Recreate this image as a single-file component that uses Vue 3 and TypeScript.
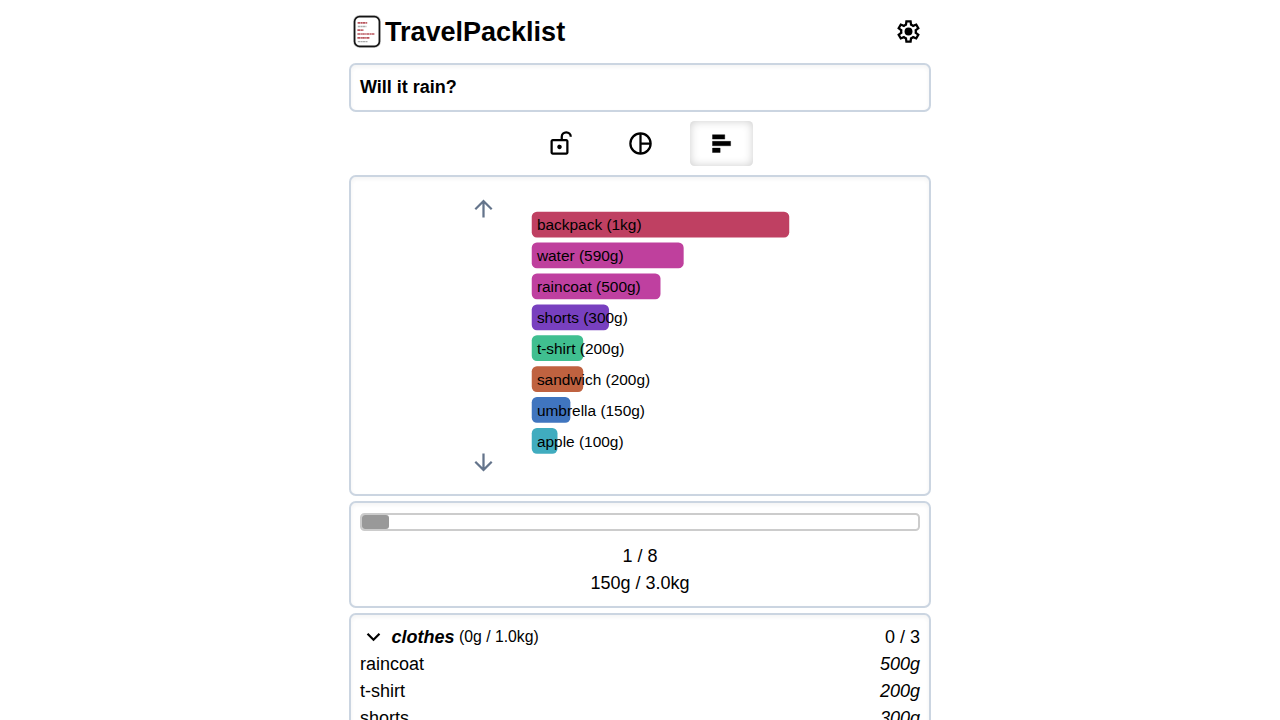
<script setup lang="ts">
interface Bar {
  name: string
  label: string
  grams: number
  color: string
}

const bars: Bar[] = [
  { name: 'backpack', label: '1kg', grams: 1000, color: '#bf4062' },
  { name: 'water', label: '590g', grams: 590, color: '#bf409d' },
  { name: 'raincoat', label: '500g', grams: 500, color: '#bf40a0' },
  { name: 'shorts', label: '300g', grams: 300, color: '#7840bf' },
  { name: 't-shirt', label: '200g', grams: 200, color: '#40bf90' },
  { name: 'sandwich', label: '200g', grams: 200, color: '#bf6240' },
  { name: 'umbrella', label: '150g', grams: 150, color: '#4075bf' },
  { name: 'apple', label: '100g', grams: 100, color: '#40acbf' },
]

const clothes = [
  { name: 'raincoat', weight: '500g' },
  { name: 't-shirt', weight: '200g' },
  { name: 'shorts', weight: '300g' },
]
</script>

<template>
  <main class="page">
    <header class="header">
      <svg class="logo" viewBox="0 0 28 33">
        <rect class="logo-glow" x="0.8" y="0.8" width="26.4" height="31.4" rx="5.5" />
        <rect class="logo-frame" x="1.6" y="1.6" width="24.8" height="29.8" rx="5" />
        <g class="logo-lines">
          <path class="red" d="M4.6 7.9h9.8M4.4 15.1h6M4.4 19h17.2M4.4 22.9h12" />
          <path class="grey" d="M4.8 11.5h8.6M4.8 26.7h10" />
        </g>
      </svg>
      <h1>TravelPacklist</h1>
      <button class="settings" aria-label="Settings">
        <svg class="icon" viewBox="0 0 24 24">
          <path
            fill-rule="evenodd"
            d="m9.25 22l-.4-3.2q-.325-.125-.612-.3t-.563-.375L4.7 19.375l-2.75-4.75l2.575-1.95Q4.5 12.5 4.5 12.338v-.675q0-.163.025-.338L1.95 9.375l2.75-4.75l2.975 1.25q.275-.2.575-.375t.6-.3l.4-3.2h5.5l.4 3.2q.325.125.613.3t.562.375l2.975-1.25l2.75 4.75l-2.575 1.95q.025.175.025.338v.674q0 .163-.05.338l2.575 1.95l-2.75 4.75l-2.95-1.25q-.275.2-.575.375t-.6.3l-.4 3.2zM11 20h1.975l.35-2.65q.775-.2 1.438-.587t1.212-.938l2.475 1.025l.975-1.7l-2.15-1.625q.125-.35.175-.737T17.5 12t-.05-.787t-.175-.738l2.15-1.625l-.975-1.7l-2.475 1.05q-.55-.575-1.212-.962t-1.438-.588L13 4h-1.975l-.35 2.65q-.775.2-1.437.588t-1.213.937L5.55 7.15l-.975 1.7l2.15 1.6q-.125.375-.175.75t-.05.8q0 .4.05.775t.175.75l-2.15 1.625l.975 1.7l2.475-1.05q.55.575 1.213.963t1.437.587z"
          />
          <circle cx="12" cy="12" r="3.5" />
        </svg>
      </button>
    </header>

    <section class="card question">Will it rain?</section>

    <nav class="tabs">
      <button class="tab" aria-label="Unlocked">
        <svg class="icon" viewBox="0 0 24 24">
          <path
            d="M6 20h12V10H6zm0 2q-.825 0-1.412-.587T4 20V10q0-.825.588-1.412T6 8h7V6q0-2.075 1.463-3.537T18 1t3.538 1.463T23 6h-2q0-1.25-.875-2.125T18 3t-2.125.875T15 6v2h3q.825 0 1.413.588T20 10v10q0 .825-.587 1.413T18 22zm6-5q.825 0 1.413-.587T14 15t-.587-1.412T12 13t-1.412.588T10 15t.588 1.413T12 17"
          />
        </svg>
      </button>
      <button class="tab" aria-label="Pie chart">
        <svg class="icon outline" viewBox="0 0 24 24">
          <circle cx="12" cy="12" r="9" />
          <path d="M12 3v18M12 12h9" />
        </svg>
      </button>
      <button class="tab active" aria-label="Bar chart">
        <svg class="icon bar-icon" viewBox="0 0 24 24">
          <path d="M4 4.2h10.9v3.9H4zM4 10.1h16.1v3.9H4zM4 16.1h6.8v3.9H4z" />
        </svg>
      </button>
    </nav>

    <section class="card chart">
      <div class="pager">
        <svg class="icon" viewBox="0 0 24 24">
          <path d="M11 20V7.825l-5.6 5.6L4 12l8-8l8 8l-1.4 1.425l-5.6-5.6V20z" />
        </svg>
        <svg class="icon" viewBox="0 0 24 24">
          <path d="M11 4v12.175l-5.6-5.6L4 12l8 8l8-8l-1.4-1.425l-5.6 5.6V4z" />
        </svg>
      </div>
      <svg class="bars" viewBox="0.25 0.3 250 240">
        <g v-for="(bar, i) in bars" :key="bar.name">
          <rect x="0" :y="i * 30" :width="bar.grams / 4" height="25" rx="5" :fill="bar.color" />
          <text x="5" :y="i * 30 + 18">{{ bar.name }} ({{ bar.label }})</text>
        </g>
      </svg>
    </section>

    <section class="card summary">
      <div class="progress"><div class="fill"></div></div>
      <div>1 / 8</div>
      <div>150g / 3.0kg</div>
    </section>

    <section class="card list">
      <div class="row">
        <div class="category">
          <svg class="icon" viewBox="0 0 24 24">
            <path d="m12 15.4-6-6L7.4 8l4.6 4.6L16.6 8 18 9.4z" />
          </svg>
          <span class="title">clothes</span>
          <span class="total">(0g / 1.0kg)</span>
        </div>
        <span>0 / 3</span>
      </div>
      <div v-for="item in clothes" :key="item.name" class="row">
        <span>{{ item.name }}</span>
        <span class="weight">{{ item.weight }}</span>
      </div>
    </section>
  </main>
</template>

<style>
html,
body {
  background: #fff;
  overflow: hidden;
}
</style>

<style scoped>
.page {
  box-sizing: border-box;
  width: 582px;
  height: 720px;
  margin: 0 auto;
  overflow: hidden;
  font: 18px/27px 'Liberation Sans', Arial, sans-serif;
  color: #000;
}

button {
  border: 0;
  background: none;
  padding: 0;
  color: inherit;
  display: flex;
}

.icon {
  display: block;
  flex: none;
  width: 27px;
  height: 27px;
  fill: currentColor;
}

.outline {
  fill: none;
  stroke: currentColor;
  stroke-width: 2;
}

.bar-icon {
  stroke: rgba(0, 0, 0, 0.5);
  stroke-width: 0.7;
}

.header {
  display: flex;
  align-items: center;
  height: 63px;
  padding: 0 9px 0 4px;
}

.logo {
  width: 28px;
  height: 33px;
  margin-right: 4px;
}

.logo-glow {
  fill: none;
  stroke: #ccc;
  stroke-width: 1.4;
}

.logo-frame {
  fill: #fff;
  stroke: #151515;
  stroke-width: 1.7;
}

.logo-lines {
  fill: none;
  stroke-width: 1.6;
  stroke-dasharray: 2.6 0.4 1.5 0.3;
}

.red {
  stroke: #b9545c;
}

.grey {
  stroke: #aaa;
  stroke-width: 1.3;
}

h1 {
  margin: 0;
  flex: 1;
  font-size: 27px;
  line-height: 36px;
}

.card {
  box-sizing: border-box;
  border: 2px solid #cbd5e1;
  border-radius: 6.75px;
  padding: 9px;
  box-shadow: inset 0 2px 4px rgba(0, 0, 0, 0.05);
}

.question {
  font-weight: bold;
  height: 49px;
  padding-top: 8.5px;
}

.tabs {
  display: flex;
  justify-content: center;
  gap: 18px;
  padding: 9px 0;
}

.tab {
  padding: 9px 18px;
  border-radius: 4.5px;
}

.active {
  box-shadow: inset 0 0 10px rgba(0, 0, 0, 0.2);
}

.chart {
  display: flex;
  height: 321px;
  padding: 18px 0 0 119px;
}

.pager {
  display: flex;
  flex-direction: column;
  justify-content: space-between;
  height: 281px;
  color: #64748b;
}

.bars {
  width: 257.5px;
  height: 247.2px;
  margin: 17px 0 0 35px;
  overflow: visible;
}

.bars text {
  font-size: 15px;
}

.summary {
  height: 107px;
  margin-top: 5px;
  text-align: center;
}

.progress {
  box-sizing: border-box;
  height: 18px;
  margin: 1px 0 11.5px;
  border: 2px solid #ccc;
  border-radius: 4.5px;
}

.fill {
  width: 27px;
  height: 14px;
  border-radius: 3px;
  background: #999;
}

.list {
  height: 150px;
  margin-top: 5px;
}

.row {
  display: flex;
  justify-content: space-between;
}

.category {
  display: flex;
}

.title {
  margin: 0 4.5px;
  font-weight: bold;
  font-style: italic;
}

.total {
  font-size: 15.75px;
  line-height: 25px;
}

.weight {
  font-style: italic;
}
</style>
